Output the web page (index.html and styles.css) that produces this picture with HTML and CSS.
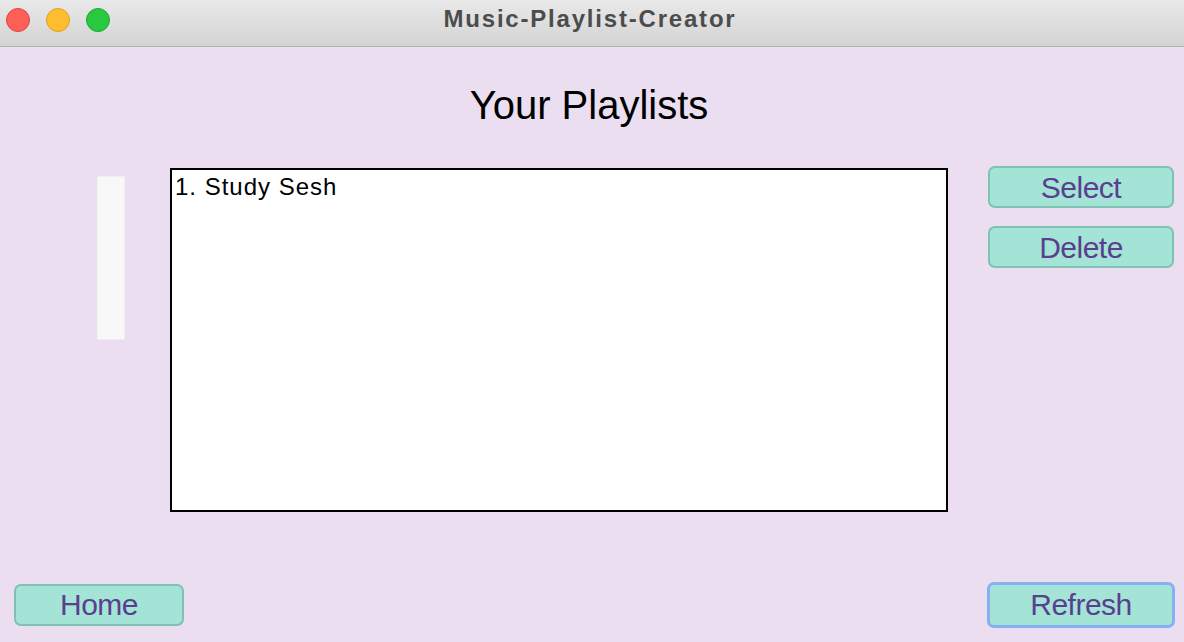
FILE: index.html
```html
<!DOCTYPE html>
<html>
<head>
<meta charset="utf-8">
<link rel="stylesheet" href="styles.css">
</head>
<body>
<div class="window">
  <div class="titlebar">
    <div class="lights">
      <span class="light red"></span>
      <span class="light yellow"></span>
      <span class="light green"></span>
    </div>
    <div class="title">Music-Playlist-Creator</div>
  </div>
  <div class="content">
    <h1 class="heading">Your Playlists</h1>
    <div class="main">
      <div class="scroll-panel"></div>
      <div class="listbox">
        <div class="item">1. Study Sesh</div>
      </div>
      <div class="side-buttons">
        <button class="btn">Select</button>
        <button class="btn">Delete</button>
      </div>
    </div>
    <div class="bottom">
      <button class="btn home">Home</button>
      <button class="btn refresh">Refresh</button>
    </div>
  </div>
</div>
</body>
</html>
```
FILE: styles.css
```css
html, body {
  margin: 0;
  padding: 0;
}
body {
  width: 1184px;
  height: 642px;
  overflow: hidden;
  font-family: "Liberation Sans", Arial, sans-serif;
}
.window {
  width: 1184px;
  height: 642px;
  display: flex;
  flex-direction: column;
  background: #ebdef0;
}
.titlebar {
  position: relative;
  height: 46px;
  border-bottom: 1px solid #b4b4b4;
  background: linear-gradient(#e9e9e9, #d3d3d3);
  display: flex;
  align-items: center;
  justify-content: center;
}
.lights {
  position: absolute;
  left: 6px;
  top: 8px;
  display: flex;
  gap: 16px;
}
.light {
  width: 22px;
  height: 22px;
  border-radius: 50%;
  border: 1px solid;
}
.red { background: #fe5f57; border-color: #e0443e; }
.yellow { background: #febc2e; border-color: #dea123; }
.green { background: #28c840; border-color: #1aab29; }
.title {
  font-weight: bold;
  font-size: 24px;
  letter-spacing: 1.8px;
  color: #4c4c4c;
  margin-top: -8px;
  padding-right: 4px;
}
.content {
  flex: 1;
  display: flex;
  flex-direction: column;
}
.heading {
  margin: 34px 0 0 0;
  text-align: center;
  font-weight: normal;
  font-size: 40px;
  line-height: 48px;
  color: #000;
  padding-right: 6px;
}
.main {
  margin-top: 37px;
  display: flex;
  align-items: flex-start;
}
.scroll-panel {
  margin-left: 97px;
  margin-top: 10px;
  width: 26px;
  height: 162px;
  background: #f8f8f8;
  border: 1px solid #f0f0f0;
}
.listbox {
  margin-left: 45px;
  margin-top: 2px;
  width: 774px;
  height: 340px;
  background: #fff;
  border: 2px solid #000;
}
.item {
  font-family: "Liberation Sans", Arial, sans-serif;
  font-size: 24px;
  letter-spacing: 1px;
  line-height: 34px;
  padding-left: 3px;
  color: #000;
}
.side-buttons {
  margin-left: 40px;
  display: flex;
  flex-direction: column;
  gap: 18px;
}
.btn {
  width: 186px;
  height: 42px;
  background: #a3e4d7;
  border: 2px solid #7fc1b3;
  border-radius: 7px;
  color: #5a3f8e;
  font-family: "Liberation Sans", Arial, sans-serif;
  font-size: 30px;
  letter-spacing: -0.5px;
  padding: 2px 0 0 0;
  line-height: 36px;
}
.bottom {
  margin-top: auto;
  margin-bottom: 14px;
  display: flex;
  justify-content: space-between;
  align-items: center;
  padding: 0 9px 0 14px;
}
.home {
  width: 170px;
  padding-top: 0;
}
.refresh {
  width: 188px;
  height: 46px;
  border: 3px solid #86b0ef;
  padding-top: 0;
}
```
